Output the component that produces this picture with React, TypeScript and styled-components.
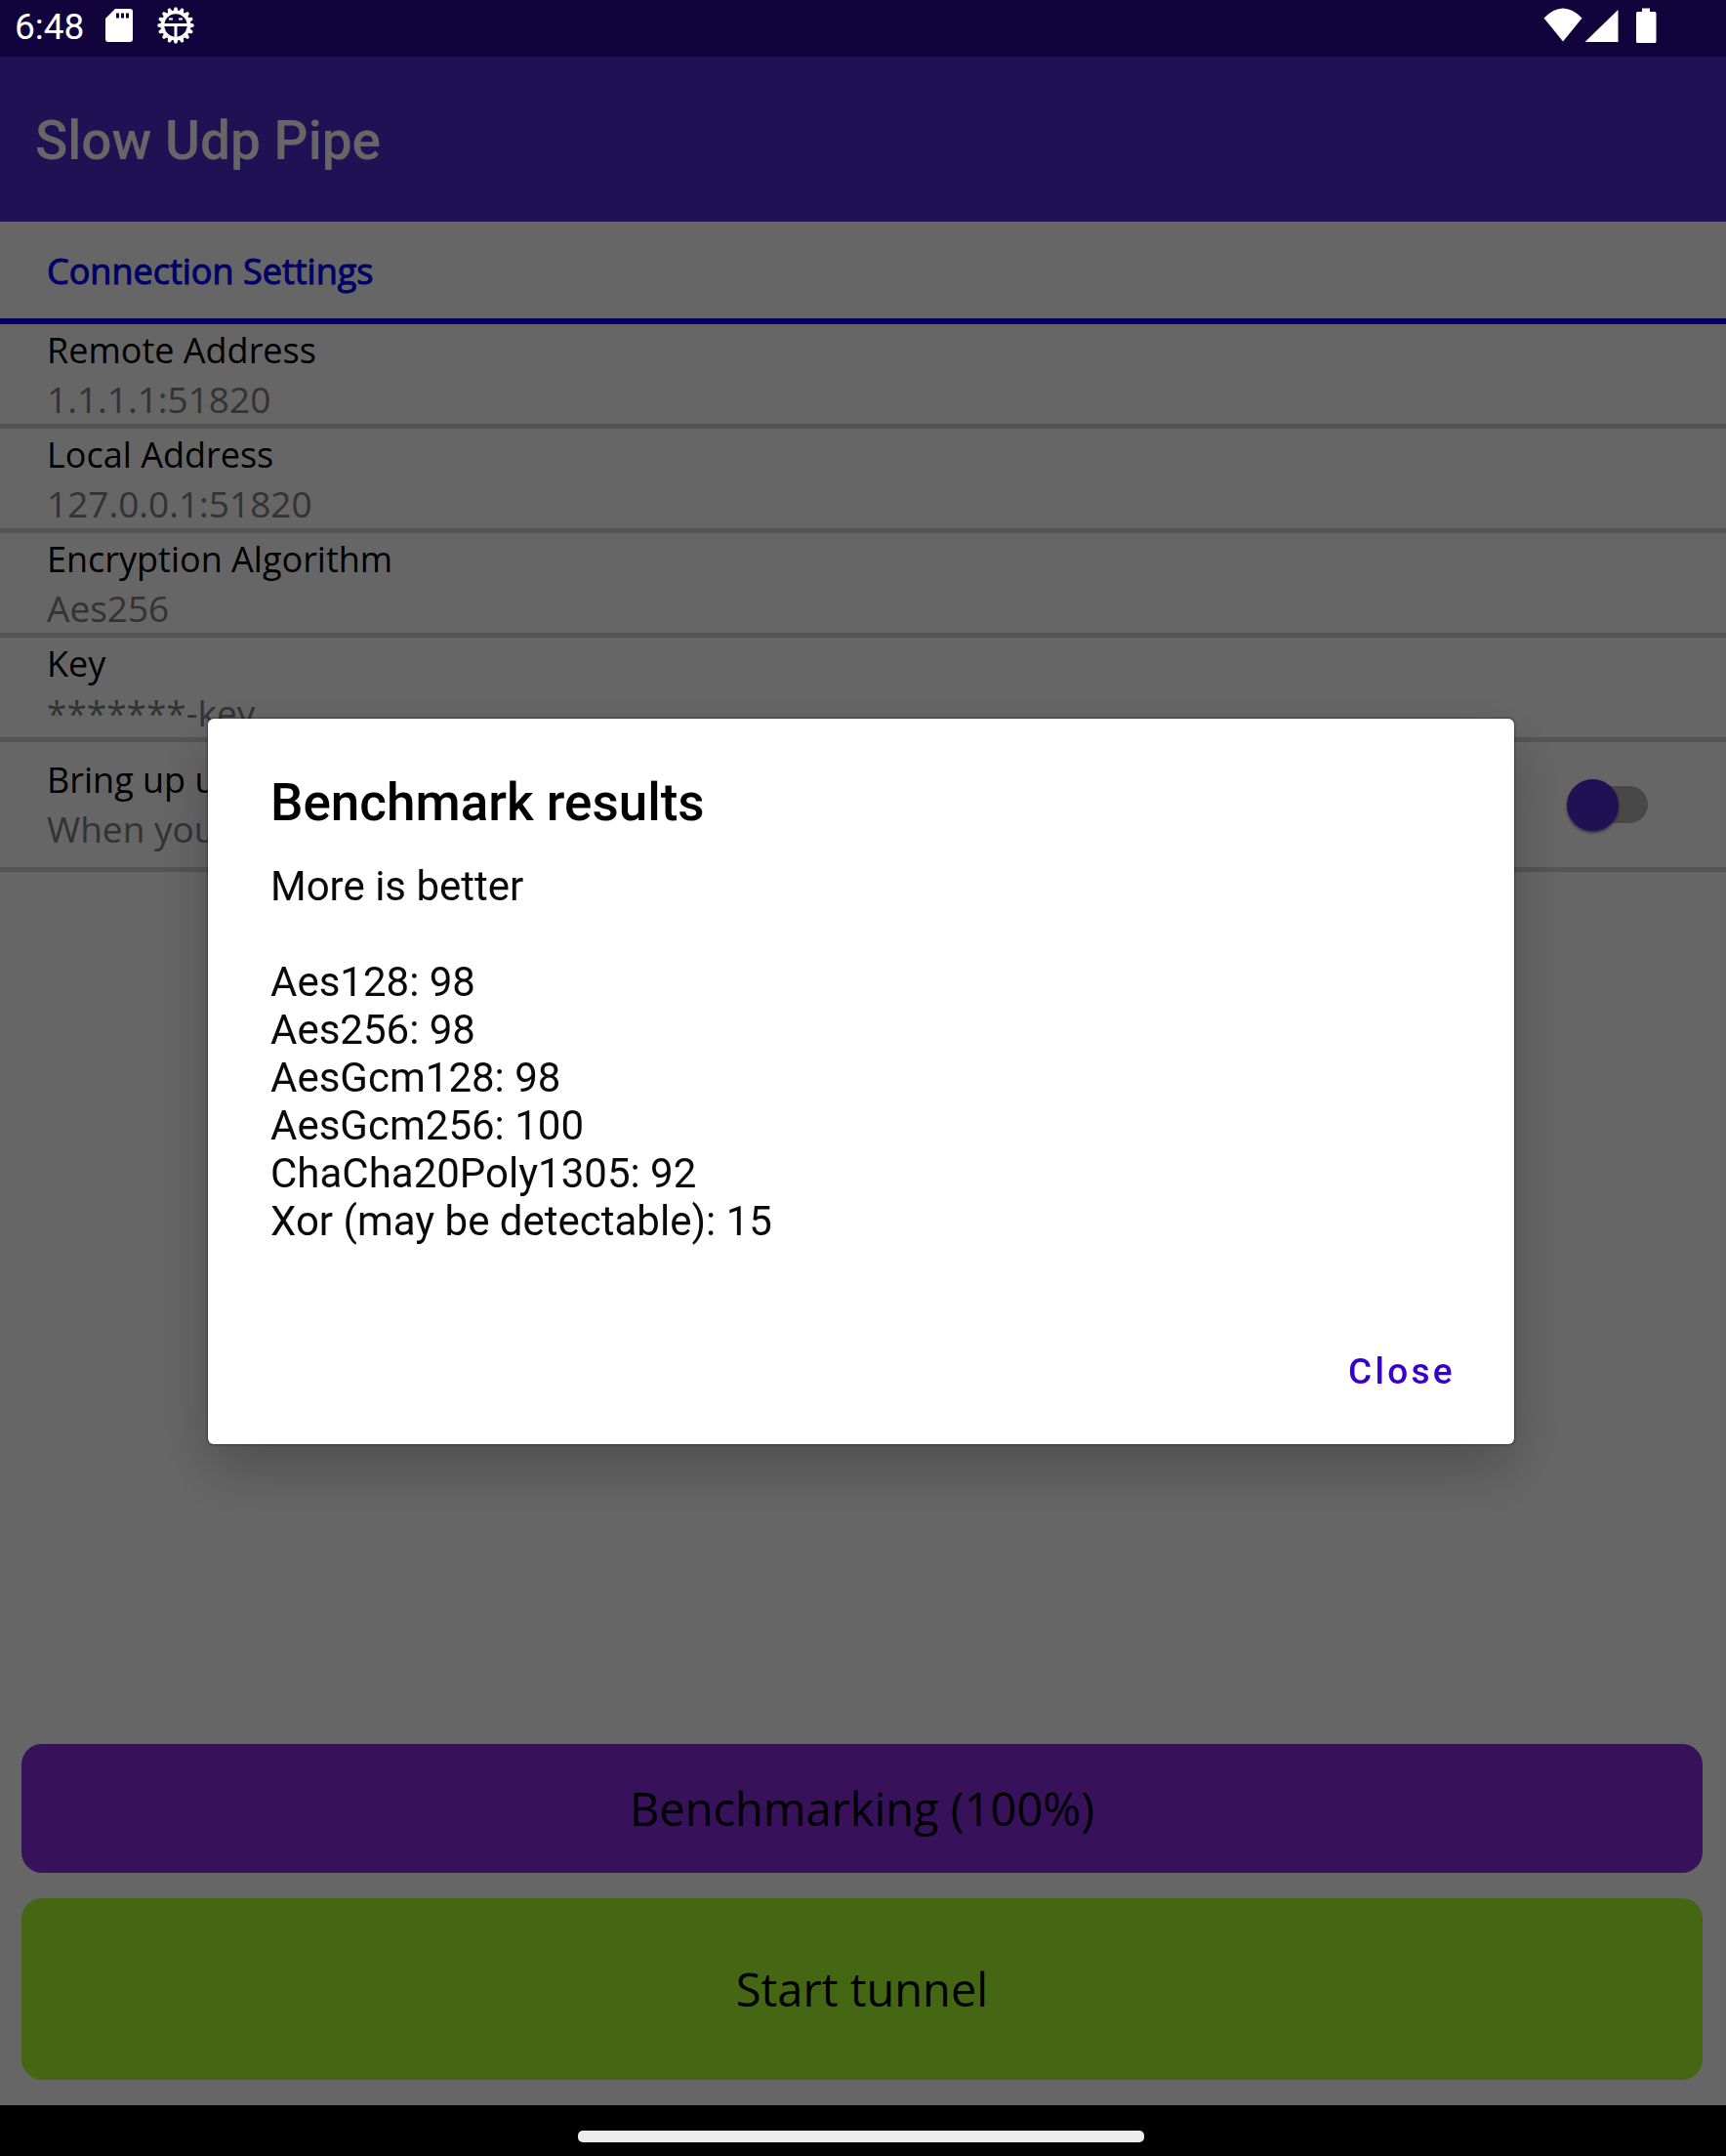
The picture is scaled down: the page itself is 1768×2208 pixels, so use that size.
import React from "react";
import styled, { createGlobalStyle } from "styled-components";

const GlobalStyle = createGlobalStyle`
  *, *::before, *::after { box-sizing: border-box; }
  body { margin: 0; background: #fff; }
  button { font: inherit; border: 0; padding: 0; cursor: pointer; }
`;

const roboto = `Roboto, "Liberation Sans", sans-serif`;
const openSans = `"Open Sans", "Noto Sans", sans-serif`;

const Screen = styled.div`
  display: flex;
  flex-direction: column;
  min-height: 100vh;
  font-family: ${openSans};
  font-size: 36px;
  line-height: 50px;
  color: #000;
`;

/* System bars sit above the dimming scrim. */
const StatusBar = styled.div`
  position: relative;
  z-index: 2;
  display: flex;
  align-items: center;
  justify-content: space-between;
  height: 58px;
  padding: 0 71px 6px 15px;
  background: #11043d;
  color: #fff;
  font-family: ${roboto};
`;

const StatusGroup = styled.div<{ $gap: number }>`
  display: flex;
  align-items: center;
  gap: ${(p) => p.$gap}px;
`;

const Clock = styled.time`
  padding-top: 3px;
  font-size: 37px;
`;

const AppBar = styled.header`
  display: flex;
  align-items: center;
  height: 169px;
  padding: 2px 36px 0;
  background: #512bd4;
`;

const AppTitle = styled.h1`
  margin: 0;
  color: #fff;
  font-family: ${roboto};
  font-size: 55px;
  font-weight: 500;
  line-height: 62px;
`;

const Content = styled.main`
  display: flex;
  flex: 1;
  flex-direction: column;
`;

const SectionHeader = styled.h2`
  margin: 0;
  padding: 26px 48px 23px;
  border-bottom: 6px solid #00f;
  color: #00f;
  font-size: 36px;
  font-weight: 400;
  -webkit-text-stroke: 1px #00f;
`;

const SettingsList = styled.ul`
  margin: 0;
  padding: 0;
  list-style: none;
`;

const SettingRow = styled.li<{ $tall?: boolean }>`
  display: flex;
  align-items: center;
  justify-content: space-between;
  padding: ${(p) => (p.$tall ? "14px 80px 14px 48px" : "2px 48px 0")};
  border-bottom: 5px solid #d3d3d3;
`;

const SettingText = styled.label`
  display: flex;
  flex-direction: column;
`;

const SettingValue = styled.span`
  color: #808080;
  font-size: 37px;
`;

const Switch = styled.input`
  appearance: none;
  display: grid;
  align-items: center;
  width: 83px;
  height: 54px;
  margin: 0;

  &::before,
  &::after {
    content: "";
    grid-area: 1 / 1;
  }
  &::before {
    height: 38px;
    margin-left: 8px;
    border-radius: 19px;
    background: #b4b4b4;
  }
  &::after {
    width: 53px;
    height: 53px;
    border-radius: 50%;
    background: #512bd4;
    box-shadow: 0 2px 3px rgba(40, 20, 120, 0.6);
  }
`;

const Actions = styled.div`
  display: flex;
  flex-direction: column;
  gap: 26px;
  margin-top: auto;
  padding: 26px 24px 26px 22px;
`;

const ActionButton = styled.button<{ $color: string; $height: number }>`
  height: ${(p) => p.$height}px;
  border-radius: 21px;
  background: ${(p) => p.$color};
  color: #000;
  font-size: 47px;
  line-height: 64px;
`;

const NavigationBar = styled.div`
  position: relative;
  z-index: 2;
  display: flex;
  align-items: center;
  justify-content: center;
  height: 52px;
  padding: 12px 4px 0 0;
  background: #000;
`;

const HomeHandle = styled.div`
  width: 580px;
  height: 12px;
  border-radius: 5px;
  background: #ececec;
`;

const Scrim = styled.div`
  position: fixed;
  inset: 0;
  z-index: 1;
  display: flex;
  align-items: center;
  padding: 58px 217px 52px 213px;
  background: rgba(0, 0, 0, 0.6);
`;

const Dialog = styled.section`
  display: flex;
  flex: 1;
  flex-direction: column;
  padding: 53px 60px 24px 64px;
  border-radius: 6px;
  background: #fff;
  box-shadow: 0 0 2px 1px rgba(0, 0, 0, 0.4), 0 26px 60px rgba(0, 0, 0, 0.24);
  font-family: ${roboto};
`;

const DialogTitle = styled.h2`
  margin: 0 0 28px;
  font-size: 53px;
  font-weight: 500;
  line-height: 66px;
`;

const DialogText = styled.p`
  margin: 0 0 80px;
  color: #0a0a0a;
  font-size: 42px;
  line-height: 49px;
  white-space: pre-line;
`;

const CloseButton = styled.button`
  align-self: flex-end;
  height: 100px;
  background: transparent;
  color: #3700cc;
  font-size: 37px;
  font-weight: 500;
  letter-spacing: 0.09em;
`;

const SdCardIcon = () => (
  <svg width="28" height="34" viewBox="0 0 28 34" aria-hidden="true">
    <path d="M10 0h15a3 3 0 0 1 3 3v28a3 3 0 0 1-3 3H3a3 3 0 0 1-3-3V10z" fill="#fff" />
    <path d="M11 4.500h3v5h-3zM16 4.500h3v5h-3zM21 4.500h3v5h-3z" fill="#11043d" />
  </svg>
);

const GearFaceIcon = () => (
  <svg width="38" height="38" viewBox="-19 -19 38 38" fill="none" stroke="#fff" aria-hidden="true">
    <circle r="13.500" strokeWidth="3.600" />
    {Array.from({ length: 16 }, (_, i) => (
      <path key={i} d="M-2.800-14L-1.200-18.600H1.200L2.800-14z" fill="#fff" stroke="none" transform={`rotate(${i * 22.5})`} />
    ))}
    <path d="M-13-0.500H13M0 0V14" strokeWidth="3" />
    <path d="M-7-6.500h4M3-6.500h4" strokeWidth="2" />
  </svg>
);

const SignalIcons = () => (
  <svg width="116" height="37" viewBox="0 0 116 37" fill="#fff" aria-hidden="true">
    <path d="M0.500 10.500Q20-9.500 39.500 10.500L20 34.500z" />
    <path d="M76.500 2V35H42.500z" />
    <path d="M101 0.500h8V4h5a1.500 1.500 0 0 1 1.500 1.500v29a1.500 1.500 0 0 1-1.500 1.500H96.500a1.500 1.500 0 0 1-1.500-1.500v-29A1.500 1.500 0 0 1 96.500 4H101z" />
  </svg>
);

const settings = [
  { name: "Remote Address", value: "1.1.1.1:51820" },
  { name: "Local Address", value: "127.0.0.1:51820" },
  { name: "Encryption Algorithm", value: "Aes256" },
  { name: "Key", value: "*******-key" },
];

const results: [string, number][] = [
  ["Aes128", 98],
  ["Aes256", 98],
  ["AesGcm128", 98],
  ["AesGcm256", 100],
  ["ChaCha20Poly1305", 92],
  ["Xor (may be detectable)", 15],
];

export default function App() {
  const message = ["More is better", "", ...results.map(([name, score]) => `${name}: ${score}`)].join("\n");

  return (
    <Screen>
      <GlobalStyle />
      <StatusBar>
        <StatusGroup $gap={22}>
          <Clock>6:48</Clock>
          <StatusGroup $gap={25}>
            <SdCardIcon />
            <GearFaceIcon />
          </StatusGroup>
        </StatusGroup>
        <SignalIcons />
      </StatusBar>
      <AppBar>
        <AppTitle>Slow Udp Pipe</AppTitle>
      </AppBar>
      <Content>
        <SectionHeader>Connection Settings</SectionHeader>
        <SettingsList>
          {settings.map((s) => (
            <SettingRow key={s.name}>
              <SettingText as="div">
                <span>{s.name}</span>
                <SettingValue>{s.value}</SettingValue>
              </SettingText>
            </SettingRow>
          ))}
          <SettingRow $tall>
            <SettingText htmlFor="bring-up">
              <span>Bring up u</span>
              <SettingValue>When you</SettingValue>
            </SettingText>
            <Switch id="bring-up" type="checkbox" role="switch" />
          </SettingRow>
        </SettingsList>
        <Actions>
          <ActionButton $color="#8a2be2" $height={132}>Benchmarking (100%)</ActionButton>
          <ActionButton $color="#adff2f" $height={186}>Start tunnel</ActionButton>
        </Actions>
      </Content>
      <NavigationBar>
        <HomeHandle />
      </NavigationBar>
      <Scrim>
        <Dialog role="dialog" aria-modal="true" aria-labelledby="dialog-title">
          <DialogTitle id="dialog-title">Benchmark results</DialogTitle>
          <DialogText>{message}</DialogText>
          <CloseButton>Close</CloseButton>
        </Dialog>
      </Scrim>
    </Screen>
  );
}
